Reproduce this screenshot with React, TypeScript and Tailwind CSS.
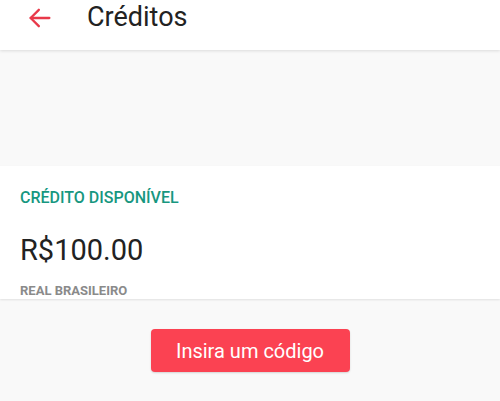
import React from "react";

export default function App() {
  return (
    <div
      className="w-[500px] h-[401px] bg-[#f9f9f9] overflow-hidden flex flex-col"
      style={{ fontFamily: "Roboto, 'Liberation Sans', sans-serif" }}
    >
      <header className="h-[50px] bg-white flex items-start pt-[5px] shrink-0 relative z-10 shadow-[0_1px_3px_rgba(0,0,0,0.12)]">
        <div className="w-[87px] flex items-start pl-[26px] mt-[-1px]">
          <svg width="28" height="28" viewBox="0 0 24 24" fill="none" stroke="#e8394a" strokeWidth="2" strokeLinecap="round" strokeLinejoin="round">
            <path d="M20 12H4" />
            <path d="M11 5l-7 7 7 7" />
          </svg>
        </div>
        <h1 className="text-[27px] font-normal text-[#222] leading-none mt-[-1px]">Créditos</h1>
      </header>
      <div className="h-[116px] shrink-0" />
      <section className="bg-white h-[133px] shrink-0 px-5 pt-[24px] shadow-[0_1px_2px_rgba(0,0,0,0.1)]">
        <div className="text-[16px] font-medium text-[#17977f] leading-none">CRÉDITO DISPONÍVEL</div>
        <div className="text-[29px] text-[#222] leading-none mt-[30px]">R$100.00</div>
        <div className="text-[13px] font-bold text-[#8a8a8a] leading-none mt-[19px]">REAL BRASILEIRO</div>
      </section>
      <div className="flex justify-center pt-[30px]">
        <button className="w-[199px] h-[43px] rounded-[4px] bg-[#fb4252] text-white text-[20px] shadow-[0_1px_2px_rgba(0,0,0,0.15)]">
          Insira um código
        </button>
      </div>
    </div>
  );
}
